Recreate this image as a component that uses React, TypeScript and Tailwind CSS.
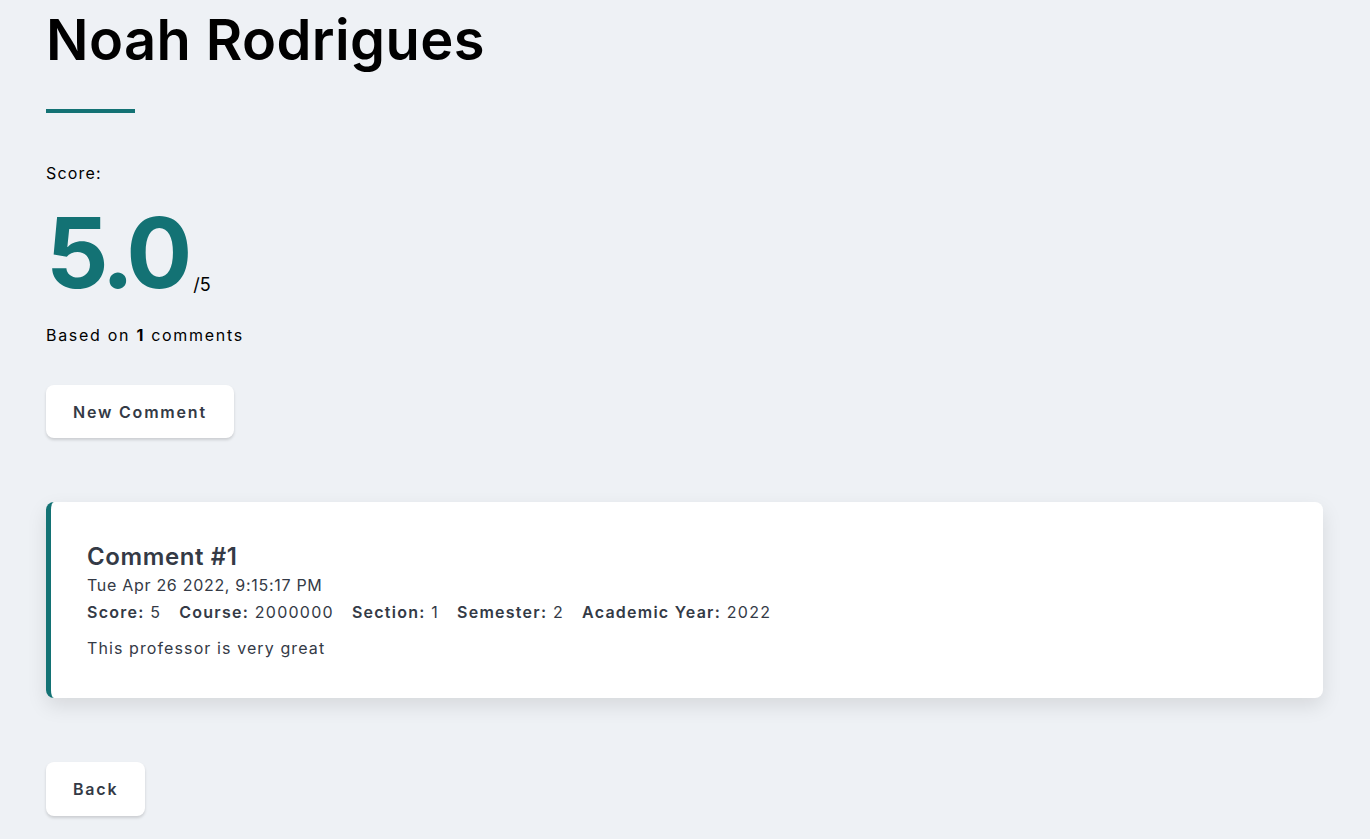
import React from "react";

export default function App() {
  return (
    <div className="min-h-screen w-full bg-[#eef1f5] pl-[46px] pr-[47px] pt-[2px] pb-[40px] font-['Inter','Noto_Sans',sans-serif]">
      <h1 className="text-[56px] font-semibold leading-[76px] text-black tracking-[0.4px]">Noah Rodrigues</h1>
      <div className="mt-[31px] h-[4px] w-[89px] bg-[#137274]" />
      <p className="mt-[48px] text-[16px] leading-[24px] tracking-[1.2px] text-black">Score:</p>
      <div className="mt-[18px] flex items-end">
        <span className="text-[98px] font-bold leading-[100px] text-[#137274] tracking-[-5px]">5.0</span>
        <span className="mb-[6px] ml-[6px] text-[18px] leading-[24px] text-black">/5</span>
      </div>
      <p className="mt-[20px] text-[16px] leading-[24px] tracking-[1.7px] text-black">
        Based on <b className="font-bold">1</b> comments
      </p>
      <button className="mt-[38px] h-[53px] rounded-[8px] bg-white px-[27px] text-[16px] font-semibold tracking-[1.8px] text-[#343a46] shadow-[0_2px_3px_rgba(0,0,0,0.15)]">
        New Comment
      </button>
      <div className="mt-[64px] rounded-[8px] border-l-[5px] border-[#137274] bg-white pl-[36px] pr-[40px] pt-[40px] pb-[38px] text-[#343a46] shadow-[0_8px_20px_rgba(0,0,0,0.10)]">
        <h2 className="text-[24px] font-semibold leading-[30px] tracking-[0.6px]">Comment #1</h2>
        <p className="text-[16px] leading-[26px] tracking-[0.7px]">Tue Apr 26 2022, 9:15:17 PM</p>
        <div className="flex gap-[18px] text-[16px] leading-[28px] tracking-[1.25px]">
          <span><b className="font-semibold">Score:</b> 5</span>
          <span><b className="font-semibold">Course:</b> 2000000</span>
          <span><b className="font-semibold">Section:</b> 1</span>
          <span><b className="font-semibold">Semester:</b> 2</span>
          <span><b className="font-semibold">Academic Year:</b> 2022</span>
        </div>
        <p className="mt-[10px] text-[16px] leading-[24px] tracking-[1.1px]">This professor is very great</p>
      </div>
      <button className="mt-[64px] h-[54px] rounded-[8px] bg-white px-[27px] text-[16px] font-semibold tracking-[1.8px] text-[#343a46] shadow-[0_2px_3px_rgba(0,0,0,0.15)]">
        Back
      </button>
    </div>
  );
}
